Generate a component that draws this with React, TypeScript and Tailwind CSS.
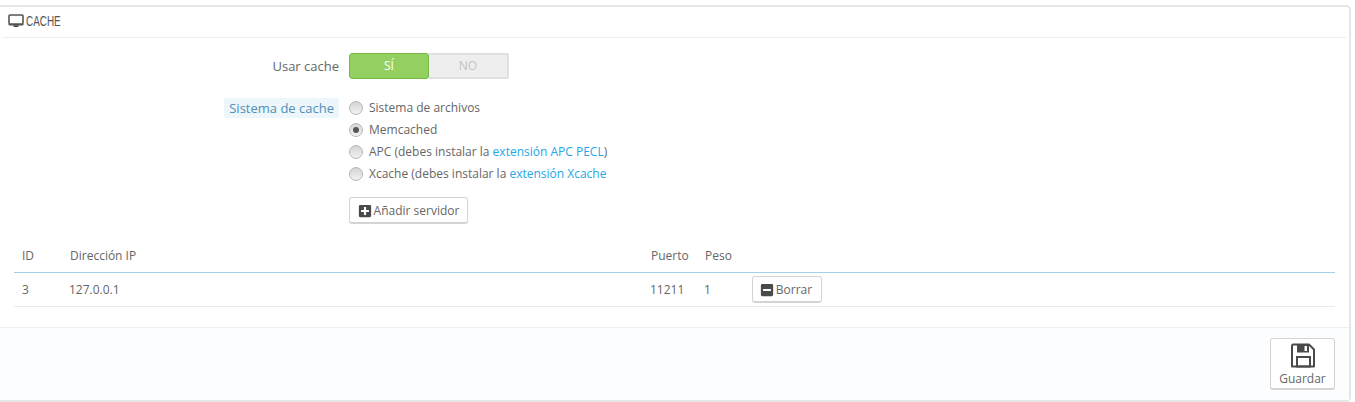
import { FaMinusSquare, FaPlusSquare } from "react-icons/fa";

const linkClass = "text-[#25a7e6]";

function RadioRow({ checked, children }: { checked?: boolean; children: React.ReactNode }) {
  return (
    <label className="flex h-[22px] items-center">
      <span className="flex h-[14px] w-[14px] items-center justify-center rounded-full border border-[#b8b8b8] bg-gradient-to-b from-[#d4d4d4] to-[#f2f2f2]">
        {checked && <span className="h-[6px] w-[6px] rounded-full bg-[#555]" />}
      </span>
      <span className="ml-[6px] whitespace-nowrap">{children}</span>
    </label>
  );
}

function DesktopIcon() {
  return (
    <svg viewBox="0 0 16 14" className="mr-[2px] h-[14px] w-[16px]">
      <rect x="1" y="1" width="14" height="9" rx="1" fill="none" stroke="#555" strokeWidth="1.6" />
      <path d="M0.5 10h15v0.6a1 1 0 0 1-1 1h-13a1 1 0 0 1-1-1zM5.5 11.5h5v1.5h-5z" fill="#555" />
    </svg>
  );
}

function SaveIcon() {
  return (
    <svg viewBox="0 0 24 25" className="h-[25px] w-[24px]">
      <path d="M2 1.5H18L23 6.5V23.5H1V2.5Z" fill="none" stroke="#4a4a4a" strokeWidth="2" strokeLinejoin="round" />
      <path d="M6 1.5H18V9.5H6Z" fill="#4a4a4a" />
      <path d="M13.5 3H16V8H13.5Z" fill="#fff" />
      <path d="M6 14H19V23.5H6Z" fill="none" stroke="#4a4a4a" strokeWidth="2" />
    </svg>
  );
}

export default function App() {
  return (
    <div className="h-[402px] overflow-hidden bg-white pt-[5px] pr-[4px] font-['Open_Sans',sans-serif] text-[12px] leading-[18px] text-[#666]">
      <div className="h-[397px] rounded-r-[5px] border-t-2 border-r-2 border-b-2 border-[#e6e6e6] bg-white">
        {/* Panel heading */}
        <div className="mr-[3px] ml-[3px] flex h-[31px] items-center border-b border-[#eeeeee] pb-[2px] pl-[5px] text-[#555]">
          <DesktopIcon />
          <span className="inline-block origin-left scale-x-[0.66] font-['Liberation_Sans',sans-serif] text-[15px]">CACHE</span>
        </div>

        {/* Form */}
        <div className="mt-[15px] flex items-center">
          <div className="w-[339px] text-right text-[13px]">Usar cache</div>
          <div className="ml-[10px] flex h-[26px] w-[160px] overflow-hidden rounded-[3px] text-[12px] font-medium">
            <span className="flex w-[80px] items-center justify-center rounded-[3px] border border-[#78b846] bg-[#93d060] text-white">SÍ</span>
            <span className="flex w-[80px] items-center justify-center border-2 border-l-0 border-[#e0e0e0] bg-[#eeeeee] text-[#c4c4c4]">NO</span>
          </div>
        </div>

        <div className="mt-[18px] flex items-start">
          <div className="flex w-[339px] justify-end pt-[1px]">
            <span className="rounded-[2px] bg-[#edf6fb] px-[5px] py-[1px] text-[13px] leading-[18px] text-[#4f8fb8]">Sistema de cache</span>
          </div>
          <div className="ml-[10px] flex flex-col items-start">
            <RadioRow>Sistema de archivos</RadioRow>
            <RadioRow checked>Memcached</RadioRow>
            <RadioRow>
              APC (debes instalar la <span className={linkClass}>extensión APC PECL</span>)
            </RadioRow>
            <RadioRow>
              Xcache (debes instalar la <span className={linkClass}>extensión Xcache</span>
            </RadioRow>
            <button className="mt-[12px] flex h-[27px] w-[119px] items-center justify-center rounded-[3px] border border-b-2 border-[#d4d4d4] bg-white pt-[2px] text-[#666]">
              <FaPlusSquare className="mr-[2px] h-[14px] w-[14px] text-[#4a4a4a]" />
              Añadir servidor
            </button>
          </div>
        </div>

        {/* Servers table */}
        <table className="mt-[16px] ml-[14px] w-[1321px] table-fixed border-collapse text-left">
          <thead>
            <tr className="h-[32px] border-b border-[#a0d0ea]">
              <th className="w-[56px] pl-[8px] font-normal">ID</th>
              <th className="w-[581px] font-normal">Dirección IP</th>
              <th className="w-[54px] font-normal">Puerto</th>
              <th className="w-[47px] font-normal">Peso</th>
              <th className="font-normal" />
            </tr>
          </thead>
          <tbody>
            <tr className="h-[34px] border-b border-[#eaeaea]">
              <td className="pt-[1px] pl-[8px]">3</td>
              <td className="pt-[1px]"><span className="-ml-[1px]">127.0.0.1</span></td>
              <td className="pt-[1px]"><span className="-ml-[1px]">11211</span></td>
              <td className="pt-[1px]"><span className="-ml-[1px]">1</span></td>
              <td>
                <button className="flex h-[27px] w-[70px] items-center justify-center rounded-[3px] border border-b-2 border-[#d4d4d4] bg-white pt-[2px] pr-[2px] text-[#666]">
                  <FaMinusSquare className="mr-[2px] h-[14px] w-[14px] text-[#4a4a4a]" />
                  Borrar
                </button>
              </td>
            </tr>
          </tbody>
        </table>

        {/* Panel footer */}
        <div className="mt-[20px] flex h-[73px] justify-end border-t border-[#eeeeee] bg-[#fcfdfe] pt-[10px] pr-[14px]">
          <button className="flex h-[52px] w-[65px] flex-col items-center rounded-[3px] border border-b-2 border-[#d4d4d4] bg-white pt-[4px] text-[#666]">
            <SaveIcon />
            <span className="mt-[2px]">Guardar</span>
          </button>
        </div>
      </div>
    </div>
  );
}
